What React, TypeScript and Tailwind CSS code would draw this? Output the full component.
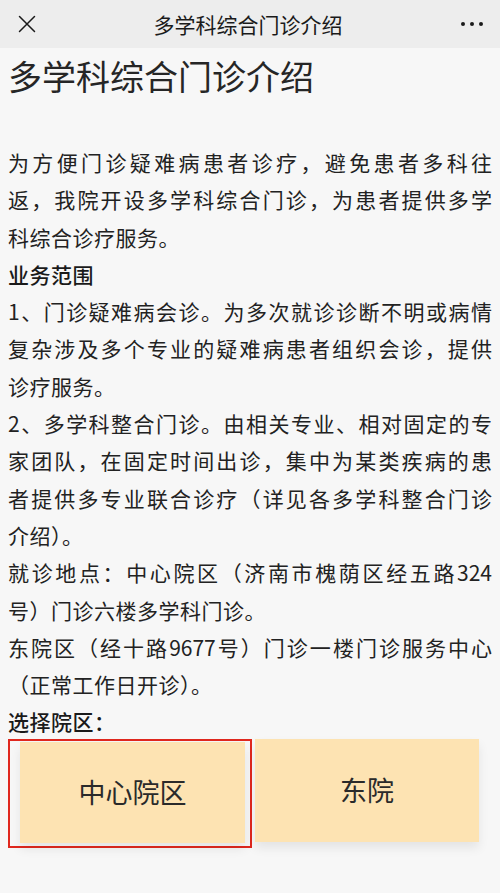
import React from "react";

// each paragraph is split into its rendered lines; full lines are justified
const paragraphs: { lines: string[]; bold?: boolean }[] = [
  {
    lines: [
      "为方便门诊疑难病患者诊疗，避免患者多科往",
      "返，我院开设多学科综合门诊，为患者提供多学",
      "科综合诊疗服务。",
    ],
  },
  { lines: ["业务范围"], bold: true },
  {
    lines: [
      "1、门诊疑难病会诊。为多次就诊诊断不明或病情",
      "复杂涉及多个专业的疑难病患者组织会诊，提供",
      "诊疗服务。",
    ],
  },
  {
    lines: [
      "2、多学科整合门诊。由相关专业、相对固定的专",
      "家团队，在固定时间出诊，集中为某类疾病的患",
      "者提供多专业联合诊疗（详见各多学科整合门诊",
      "介绍）。",
    ],
  },
  {
    lines: [
      "就诊地点：中心院区（济南市槐荫区经五路324",
      "号）门诊六楼多学科门诊。",
    ],
  },
  {
    lines: [
      "东院区（经十路9677号）门诊一楼门诊服务中心",
      "（正常工作日开诊）。",
    ],
  },
  { lines: ["选择院区："], bold: true },
];

const Header = () => (
  <div className="h-[48px] bg-[#ededed] flex items-center px-[16px]">
    <div className="w-[40px] flex items-center">
      <svg width="20" height="20" viewBox="0 0 20 20" className="ml-[1px]">
        <path d="M2.5 2.5 L17.5 17.5 M17.5 2.5 L2.5 17.5" stroke="#1a1a1a" strokeWidth="1.5" strokeLinecap="round" />
      </svg>
    </div>
    <div className="flex-1 text-center text-[21px] text-[#1a1a1a] leading-none pr-[4px]">多学科综合门诊介绍</div>
    <div className="w-[40px] flex gap-[5px] items-center justify-end pr-[1px]">
      <span className="w-[4px] h-[4px] rounded-full bg-[#1a1a1a]" />
      <span className="w-[4px] h-[4px] rounded-full bg-[#1a1a1a]" />
      <span className="w-[4px] h-[4px] rounded-full bg-[#1a1a1a]" />
    </div>
  </div>
);

export default function App() {
  return (
    <div
      className="w-[500px] min-h-[893px] bg-[#f7f7f7] text-[#222]"
      style={{ fontFamily: '"Noto Sans CJK SC", "Noto Sans", sans-serif' }}
    >
      <Header />
      <div className="px-[8px]">
        <h1 className="text-[34px] leading-[56px] font-normal text-[#262626]">
          多学科综合门诊介绍
        </h1>
        <div className="mt-[40px] text-[21px] leading-[37.3px]">
          {paragraphs.map((p, i) => (
            <div key={i} className={p.bold ? "font-medium text-[#1a1a1a]" : ""}>
              {p.lines.map((l, j) => {
                const full = j < p.lines.length - 1;
                return (
                  <p
                    key={j}
                    className={
                      full
                        ? "text-justify [text-align-last:justify] whitespace-nowrap"
                        : "tracking-[0.5px] whitespace-nowrap"
                    }
                  >
                    {l}
                  </p>
                );
              })}
            </div>
          ))}
        </div>
        <div className="flex -mt-[2px]">
          <div className="w-[244px] h-[109px] border-2 border-[#e0281e] pl-[10px] pr-[5px] pt-[1px] pb-[3px]">
            <div className="h-full bg-[#fde3b2] shadow-[0_6px_10px_rgba(0,0,0,0.08)] flex items-center justify-center text-[27px] text-[#2a2a2a]">
              中心院区
            </div>
          </div>
          <div className="ml-[3px] w-[224px] h-[103px] bg-[#fde3b2] shadow-[0_6px_10px_rgba(0,0,0,0.08)] flex items-center justify-center text-[27px] text-[#2a2a2a]">
            东院
          </div>
        </div>
      </div>
    </div>
  );
}
